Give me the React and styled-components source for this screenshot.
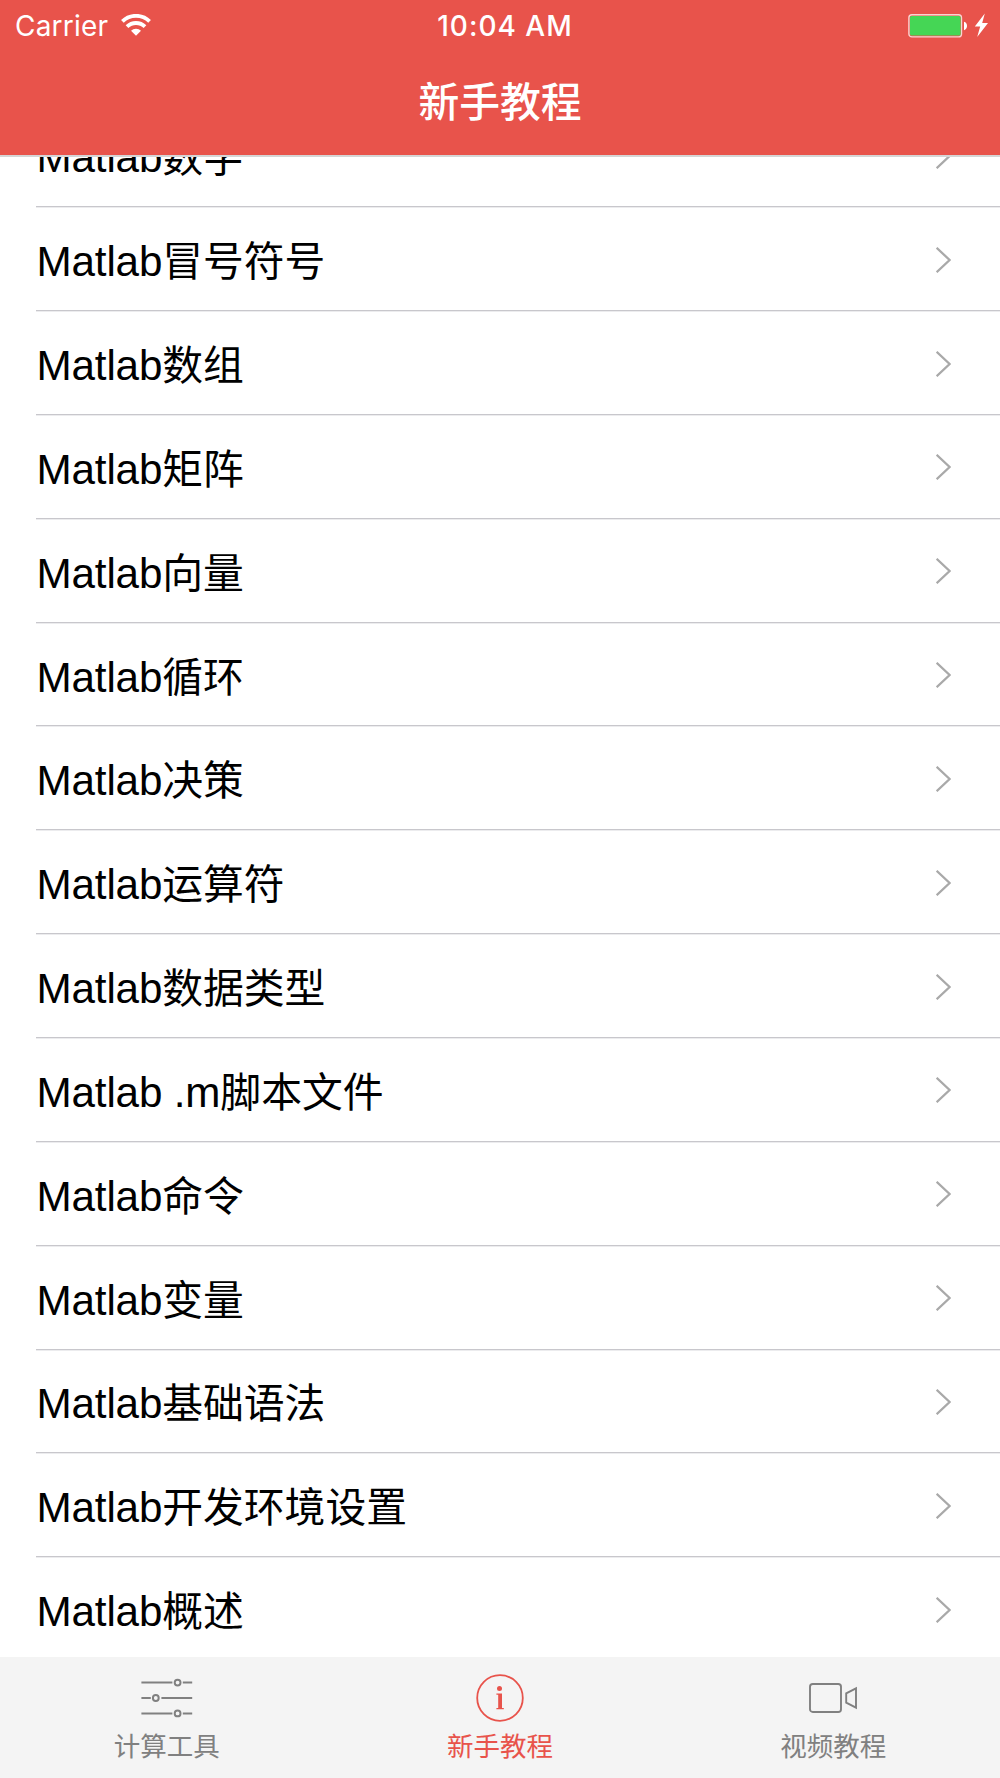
import React from 'react';
import styled, { createGlobalStyle } from 'styled-components';

const GlobalStyle = createGlobalStyle`
  * {
    box-sizing: border-box;
  }
  body {
    margin: 0;
    background: #fff;
  }
`

const Screen = styled.div`
  display: flex;
  flex-direction: column;
  width: 1000px;
  height: 1778px;
  overflow: hidden;
  background: #fff;
  font-family: "Liberation Sans", "Noto Sans CJK SC", sans-serif;
`

const Header = styled.header`
  flex: none;
  height: 157px;
  background: #e8534b;
  border-bottom: 2px solid #d5d5d5;
  color: #fff;
`

const StatusBar = styled.div`
  display: grid;
  grid-template-columns: 1fr auto 1fr;
  align-items: center;
  height: 51px;
  padding: 0 12px 0 15px;
  font-family: Inter, sans-serif;
  font-size: 28px;
  line-height: 52px;
`

const Carrier = styled.div`
  display: flex;
  align-items: center;
  gap: 13px;
  letter-spacing: 0.2px;

  svg {
    margin-bottom: 3px;
  }
`

const Clock = styled.div`
  padding-left: 7px;
  font-weight: 500;
  letter-spacing: 1px;
`

const Power = styled.div`
  display: flex;
  justify-content: flex-end;
  padding-bottom: 1px;
`

const NavTitle = styled.h1`
  margin: 0;
  height: 104px;
  font-size: 40.8px;
  font-weight: 500;
  line-height: 104px;
  text-align: center;
`

const List = styled.ul`
  flex: 1;
  min-height: 0;
  margin: 0;
  padding: 0;
  overflow: hidden;
  list-style: none;
`

const Row = styled.li`
  display: flex;
  align-items: center;
  justify-content: space-between;
  height: 103.85px;
  margin-left: 36px;
  padding: 2px 49px 0 0;
  border-bottom: 1px solid #c8c7cc;
  box-shadow: 0 1px #ececee;
  color: #000;
  font-size: 40.8px;
  line-height: 60px;
  white-space: pre;

  &:first-child {
    margin-top: -53.6px;
  }
`

const RowLabel = styled.span`
  padding: 5px 0 0 0.5px;
`

const Latin = styled.span`
  font-size: 42.2px;
  letter-spacing: -0.15px;
`

const TabBar = styled.nav`
  display: grid;
  grid-template-columns: repeat(3, 1fr);
  flex: none;
  height: 121px;
  background: #f4f4f4;
`

const Tab = styled.div`
  display: flex;
  flex-direction: column;
  align-items: center;
  padding-top: 14px;
  color: ${(props) => (props.$active ? '#e8534b' : '#808080')};
  font-size: 26.5px;
  line-height: 38px;

  svg {
    flex: none;
    margin-bottom: 3px;
  }
`

const WifiIcon = () => (
  <svg width="30" height="22" viewBox="0 0 30 22" fill="none" stroke="#fff" strokeWidth="3.8">
    <path d="M1.4 7.4a19.3 19.3 0 0 1 27.2 0" />
    <path d="M6 12.7a12.8 12.8 0 0 1 18 0" />
    <path d="M15 21.8l-5-5a7 7 0 0 1 10 0z" fill="#fff" stroke="none" />
  </svg>
)

const BatteryIcon = () => (
  <svg width="80" height="26" viewBox="0 0 80 26">
    <rect x="0.9" y="1.7" width="52.6" height="22.2" rx="3" fill="none" stroke="#fff" strokeOpacity="0.75" strokeWidth="1.4" />
    <rect x="2" y="2.9" width="50.6" height="19.6" rx="1.6" fill="#45d655" />
    <path d="M56 8.8c4 1 4 7.4 0 8.4z" fill="#fff" />
    <path d="M76.8 0.6L66.8 13.6h5.4L69.2 24 80 10h-5.8z" fill="#fff" />
  </svg>
)

const Chevron = () => (
  <svg width="15" height="26" viewBox="0 0 15 26" fill="none" stroke="#a9a9a9" strokeWidth="2.3">
    <path d="M0.6 0.8L13.6 13 0.6 25.2" />
  </svg>
)

const SlidersIcon = () => (
  <svg width="54" height="54" viewBox="0 0 54 54" fill="none" stroke="#808080" strokeWidth="2">
    <path d="M1.4 11.6h31M42.8 11.6h9.4M1.4 27h9.4M21.4 27h30.8M1.4 42.4h31M42.8 42.4h9.4" />
    <circle cx="37.6" cy="11.6" r="2.9" />
    <circle cx="15.8" cy="27" r="2.9" />
    <circle cx="37.6" cy="42.4" r="2.9" />
  </svg>
)

const InfoIcon = () => (
  <svg width="54" height="54" viewBox="0 0 54 54">
    <circle cx="27" cy="27" r="22.8" fill="none" stroke="#e8534b" strokeWidth="1.8" />
    <circle cx="26.5" cy="17.6" r="2.5" fill="#e8534b" />
    <path d="M23.4 22.4h5.6v14.6h1.8v1.3h-7.4V37h1.8V23.7h-1.8z" fill="#e8534b" />
  </svg>
)

const VideoIcon = () => (
  <svg width="54" height="54" viewBox="0 0 54 54" fill="none" stroke="#808080" strokeWidth="1.9">
    <rect x="4" y="13" width="31" height="28" rx="2.8" />
    <path d="M50 17.4v19.2l-9.8-5V22.4z" />
  </svg>
)

const chapters = [
  '数字',
  '冒号符号',
  '数组',
  '矩阵',
  '向量',
  '循环',
  '决策',
  '运算符',
  '数据类型',
  '脚本文件',
  '命令',
  '变量',
  '基础语法',
  '开发环境设置',
  '概述',
]

const tabs = [
  { label: '计算工具', icon: <SlidersIcon /> },
  { label: '新手教程', icon: <InfoIcon />, active: true },
  { label: '视频教程', icon: <VideoIcon /> },
]

export default function App() {
  return (
    <Screen>
      <GlobalStyle />
      <Header>
        <StatusBar>
          <Carrier>
            Carrier
            <WifiIcon />
          </Carrier>
          <Clock>10:04 AM</Clock>
          <Power>
            <BatteryIcon />
          </Power>
        </StatusBar>
        <NavTitle>新手教程</NavTitle>
      </Header>
      <List>
        {chapters.map((name) => (
          <Row key={name}>
            <RowLabel>
              <Latin>{name === '脚本文件' ? 'Matlab .m' : 'Matlab'}</Latin>
              {name}
            </RowLabel>
            <Chevron />
          </Row>
        ))}
      </List>
      <TabBar>
        {tabs.map((tab) => (
          <Tab key={tab.label} $active={tab.active}>
            {tab.icon}
            {tab.label}
          </Tab>
        ))}
      </TabBar>
    </Screen>
  )
}
